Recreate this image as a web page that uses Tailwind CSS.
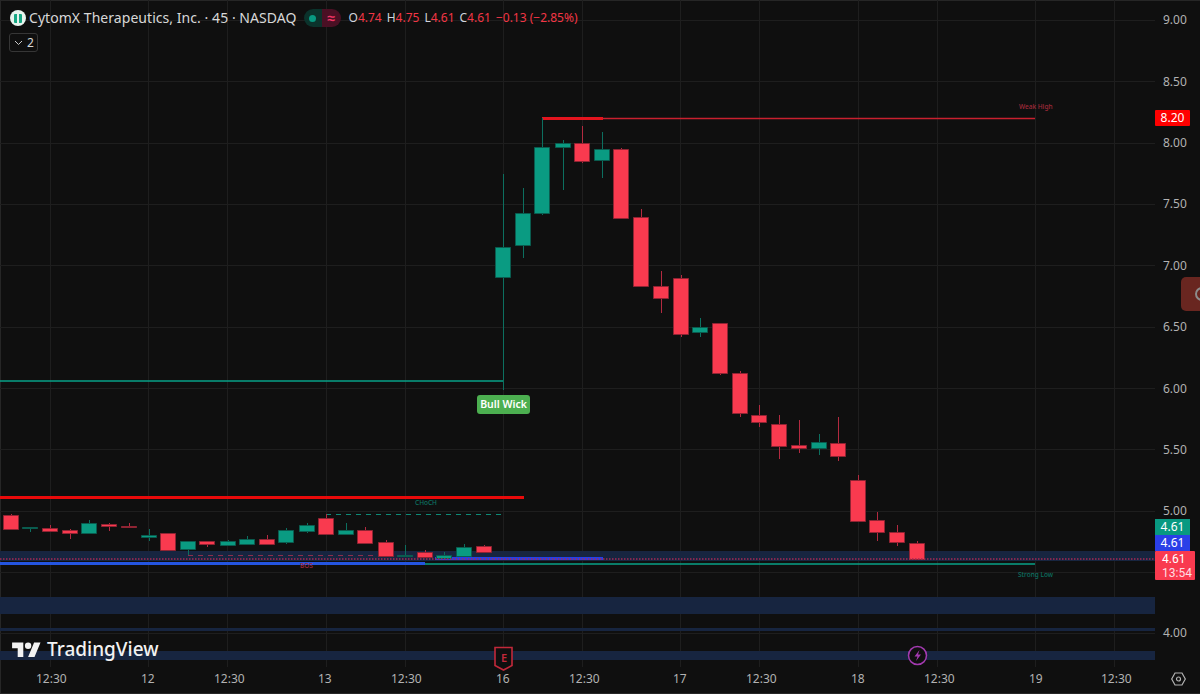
<!DOCTYPE html>
<html>
<head>
<meta charset="utf-8">
<script src="https://cdn.jsdelivr.net/npm/@tailwindcss/browser@4"></script>
</head>
<body class="m-0 bg-[#0f0f0f] overflow-hidden">
<div class="w-[1200px] h-[694px] flex flex-col bg-[#0f0f0f] font-['Noto_Sans','Liberation_Sans',sans-serif] border-t border-l border-b border-[#262626] box-border">
  <div class="flex h-[666px] shrink-0">
    <!-- chart pane -->
    <div class="relative w-[1154px] h-full overflow-visible">
      <svg class="absolute left-[-1px] top-[-1px]" width="1200" height="680" viewBox="0 0 1200 680" fill="none">
        <!-- grid -->
        <path stroke="#1e1e1e" d="M50.500 0V667M148.500 0V667M227.500 0V667M326.500 0V667M405.500 0V667M503.500 0V667M582.500 0V667M680.500 0V667M759.500 0V667M858.500 0V667M937.500 0V667M1035.500 0V667M1114.500 0V667"/>
        <path stroke="#1e1e1e" d="M0 20.500H1155M0 81.500H1155M0 143.500H1155M0 204.500H1155M0 265.500H1155M0 327.500H1155M0 388.500H1155M0 449.500H1155M0 511.500H1155M0 572.500H1155M0 633.500H1155"/>
        <!-- zones -->
        <g fill="#172540">
          <rect x="0" y="551" width="1155" height="10"/>
          <rect x="0" y="597" width="1155" height="17"/>
          <rect x="0" y="628" width="1155" height="3"/>
          <rect x="0" y="651" width="1155" height="9"/>
        </g>
        <!-- structure lines -->
        <rect x="0" y="496" width="524" height="3" fill="#e80a0a"/>
        <path stroke="#0e8a76" stroke-dasharray="5 5" d="M326 514.500H503"/>
        <path stroke="#8c2f4c" stroke-dasharray="5 5" d="M188 555.500H386"/>
        <path stroke="#08a288" stroke-width="1.500" d="M0 381H503"/>
        <path stroke="#0c6f5f" d="M503.500 381V388"/>
        <path stroke="#08a288" stroke-width="1.500" d="M425 564H1035"/>
        <rect x="0" y="562" width="425" height="3" fill="#2455e0"/>
        <rect x="435" y="557" width="168" height="3" fill="#2440e8"/>
        <path stroke="#c8202f" stroke-width="1.500" d="M542 118.500H1035"/>
        <rect x="542" y="117" width="61" height="3" fill="#e4141e"/>
        <!-- wicks -->
        <path stroke="#b32a40" d="M11.500 514V529M50.500 525V531M70.500 529V539M109.500 523V531M129.500 523V528M207.500 541V547M267.500 535V544M326.500 514V534M365.500 527V543M386.500 540V557M425.500 550V557M484.500 545V552M582.500 126V163M621.500 148V219M641.500 209V287M661.500 271V313M681.500 275V337M720.500 323V375M740.500 371V417M759.500 405V427M779.500 415V459M799.500 420V453M838.500 417V461M858.500 475V522M877.500 512V541M897.500 525V546M917.500 541V559"/>
        <path stroke="#0c6f5f" d="M30.500 528V532M89.500 520V533M149.500 529V541M188.500 541V555M228.500 540V545M247.500 536V544M286.500 528V544M307.500 523V533M346.500 523V534M405.500 545V556M444.500 552V558M464.500 544V556M503.500 174V390M523.500 188V258M542.500 118V215M563.500 140V190M602.500 132V178M700.500 318V337M819.500 434V455"/>
        <!-- bodies -->
        <path fill="#f93a4f" stroke="#8f2433" d="M3.500 515.500h15v14h-15zM42.500 528.500h15v3h-15zM62.500 530.500h15v3h-15zM101.500 524.500h15v2h-15zM121.500 526.500h15v1h-15zM160.500 533.500h15v17h-15zM199.500 541.500h15v3h-15zM259.500 539.500h15v5h-15zM318.500 518.500h15v16h-15zM357.500 530.500h15v13h-15zM378.500 542.500h15v14h-15zM417.500 552.500h15v5h-15zM476.500 546.500h15v6h-15zM574.500 143.500h15v18h-15zM613.500 149.500h15v69h-15zM633.500 217.500h15v69h-15zM653.500 286.500h15v12h-15zM673.500 278.500h15v56h-15zM712.500 323.500h15v50h-15zM732.500 373.500h15v40h-15zM751.500 415.500h15v7h-15zM771.500 424.500h15v22h-15zM791.500 445.500h15v3h-15zM830.500 443.500h15v13h-15zM850.500 480.500h15v41h-15zM869.500 520.500h15v12h-15zM889.500 532.500h15v10h-15zM909.500 543.500h15v16h-15z"/>
        <path fill="#0a9b82" stroke="#0a5c4f" d="M22.500 527.500h15v1h-15zM81.500 523.500h15v10h-15zM141.500 535.500h15v2h-15zM180.500 541.500h15v8h-15zM220.500 541.500h15v4h-15zM239.500 539.500h15v5h-15zM278.500 530.500h15v12h-15zM299.500 525.500h15v6h-15zM338.500 530.500h15v4h-15zM397.500 555.500h15v1h-15zM436.500 555.500h15v3h-15zM456.500 547.500h15v9h-15zM495.500 247.500h15v30h-15zM515.500 213.500h15v32h-15zM534.500 147.500h15v66h-15zM555.500 143.500h15v4h-15zM594.500 149.500h15v11h-15zM692.500 327.500h15v5h-15zM811.500 442.500h15v6h-15z"/>
        <!-- price line on top -->
        <path stroke="#a52a55" stroke-width="1.500" stroke-dasharray="1.500 1.500" d="M0 559H1155"/>
        <path stroke="#c2283a" stroke-width="1.600" d="M495 647.500h17v18l-8.500 4.500-8.500-4.500z" fill="#0f0f0f"/>
        <circle cx="917.500" cy="655.500" r="9" stroke="#a33ab0" stroke-width="1.500" fill="#0f0f0f"/>
        <path fill="#a33ab0" d="M919.500 650l-5 6.500h3l-1.500 4.500 5-6.500h-3z"/>
      </svg>

      <!-- legend -->
      <div class="absolute left-[9px] top-[7px] flex flex-col gap-[5px]">
        <div class="flex items-center h-[20px] text-[14px] leading-[20px] text-[#d8d8d8]">
          <span class="flex items-center justify-center w-[16px] h-[16px] rounded-full bg-[#e8f4ee] mr-[3px]"><span class="w-[8px] h-[9px] rounded-[1px] bg-[#17a884] flex justify-center"><span class="w-[2px] h-[9px] bg-[#e8f4ee]"></span></span></span>
          <span class="whitespace-nowrap tracking-[0.05px]">CytomX Therapeutics, Inc. · 45 · NASDAQ</span>
          <span class="ml-[7px] flex h-[18px] w-[37px] rounded-full overflow-hidden">
            <span class="flex-1 bg-[#0b332c] flex items-center justify-center"><span class="w-[7px] h-[7px] rounded-full bg-[#089981]"></span></span>
            <span class="flex-1 bg-[#4a1024] flex items-center justify-center text-[14px] font-bold text-[#f23666]">≈</span>
          </span>
          <span class="ml-[8px] flex gap-[5px] text-[12px] text-[#f23645] whitespace-nowrap">
            <span><span class="text-[#d1d4dc]">O</span>4.74</span>
            <span><span class="text-[#d1d4dc]">H</span>4.75</span>
            <span><span class="text-[#d1d4dc]">L</span>4.61</span>
            <span><span class="text-[#d1d4dc]">C</span>4.61</span>
            <span>−0.13 (−2.85%)</span>
          </span>
        </div>
        <div class="flex items-center gap-[4px] w-[29px] h-[19px] ml-[-1px] border border-[#363636] rounded-[3px] pl-[4px] text-[12px] text-[#d8d8d8]">
          <svg width="9" height="6" viewBox="0 0 9 6" fill="none"><path d="M1 1l3.500 3.500L8 1" stroke="#c8c8c8"/></svg>
          <span>2</span>
        </div>
      </div>

      <!-- chart labels -->
      <span class="absolute left-[414px] top-[498px] text-[6.5px] leading-[8px] font-medium text-[#0d7261]">CHoCH</span>
      <span class="absolute left-[299px] top-[561px] text-[6.5px] leading-[8px] font-medium text-[#a32a3a]">BOS</span>
      <span class="absolute left-[1018px] top-[102px] text-[6.5px] leading-[8px] font-medium text-[#a32a3a] whitespace-nowrap">Weak High</span>
      <span class="absolute left-[1017px] top-[570px] text-[6.5px] leading-[8px] font-medium text-[#0d7261] whitespace-nowrap">Strong Low</span>
      <span class="absolute left-[476px] top-[394px] w-[53px] h-[19px] rounded-[3px] bg-[#4caf50] text-white text-[10.5px] font-semibold leading-[19px] text-center">Bull Wick</span>
      <span class="absolute left-[497px] top-[650px] w-[12px] text-center text-[11px] leading-[14px] font-semibold text-[#c2283a]">E</span>

      <!-- watermark -->
      <div class="absolute left-[11px] top-[637px] flex items-center gap-[6px]">
        <svg width="29" height="16" viewBox="0 0 36 20" fill="#f2f2f2"><path d="M14 20H7V9H0V2h14v18zM28 20h-8l7.500-18h8L28 20z"/><circle cx="20" cy="6" r="4"/></svg>
        <span class="text-[19px] leading-[22px] font-medium text-[#f2f2f2] whitespace-nowrap">TradingView</span>
      </div>
    </div>

    <!-- price axis -->
    <div class="relative flex-1 h-full text-[12px] leading-[16px] text-[#b2b2b2]">
      <span class="absolute left-[8px] top-[11px]">9.00</span>
      <span class="absolute left-[8px] top-[73px]">8.50</span>
      <span class="absolute left-[8px] top-[134px]">8.00</span>
      <span class="absolute left-[8px] top-[195px]">7.50</span>
      <span class="absolute left-[8px] top-[257px]">7.00</span>
      <span class="absolute left-[8px] top-[318px]">6.50</span>
      <span class="absolute left-[8px] top-[380px]">6.00</span>
      <span class="absolute left-[8px] top-[441px]">5.50</span>
      <span class="absolute left-[8px] top-[502px]">5.00</span>
      <span class="absolute left-[8px] top-[624px]">4.00</span>
      <span class="absolute left-0 top-[109px] w-[35px] h-[16px] bg-[#ff0000] text-white text-center rounded-[1px]">8.20</span>
      <span class="absolute left-0 top-[518px] w-[35px] h-[16px] bg-[#089981] text-white text-center">4.61</span>
      <span class="absolute left-0 top-[534px] w-[35px] h-[16px] bg-[#2a3fe8] text-white text-center">4.61</span>
      <span class="absolute left-0 top-[550px] w-[40px] h-[29px] bg-[#f93a4f] text-white rounded-[1px] pl-[7px] pt-[1px] leading-[14px] font-['Roboto',sans-serif]">4.61<br><span class="text-[#ffdfe3]">13:54</span></span>
      <span class="absolute left-[26px] top-[276px] w-[19px] h-[34px] bg-[#692620] rounded-l-[5px] overflow-hidden"><span class="absolute left-[14px] top-[10px] w-[14px] h-[14px] rounded-full border-2 border-[#8c8c8c]"></span></span>
    </div>
  </div>

  <!-- time axis -->
  <div class="relative flex-1 text-[12px] leading-[16px] text-[#b2b2b2]">
    <span class="absolute left-[35px] top-[4px]">12:30</span>
    <span class="absolute left-[140px] top-[4px]">12</span>
    <span class="absolute left-[213px] top-[4px]">12:30</span>
    <span class="absolute left-[317px] top-[4px]">13</span>
    <span class="absolute left-[390px] top-[4px]">12:30</span>
    <span class="absolute left-[495px] top-[4px]">16</span>
    <span class="absolute left-[568px] top-[4px]">12:30</span>
    <span class="absolute left-[672px] top-[4px]">17</span>
    <span class="absolute left-[745px] top-[4px]">12:30</span>
    <span class="absolute left-[850px] top-[4px]">18</span>
    <span class="absolute left-[923px] top-[4px]">12:30</span>
    <span class="absolute left-[1028px] top-[4px]">19</span>
    <span class="absolute left-[1100px] top-[4px]">12:30</span>
    <svg class="absolute left-[1170px] top-[5px]" width="15" height="14" viewBox="0 0 15 14" fill="none" stroke="#b2b2b2" stroke-width="1.200"><path d="M4 1h7l3.300 6L11 13H4L.7 7z"/><circle cx="7.500" cy="7" r="2"/></svg>
  </div>
</div>
</body>
</html>
